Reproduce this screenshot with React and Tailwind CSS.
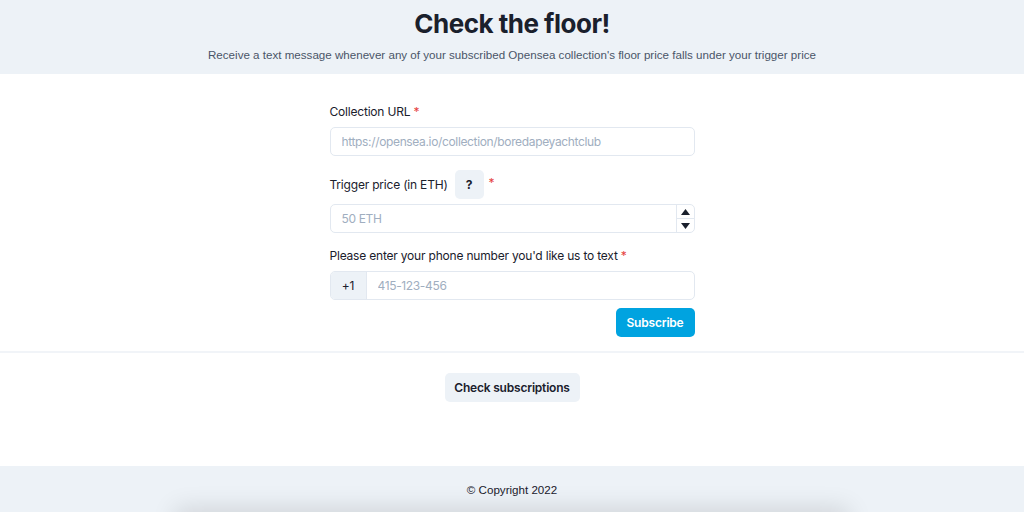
export default function App() {
  const sans = { fontFamily: "Inter, 'Noto Sans', sans-serif" };
  return (
    <div className="min-h-[512px] bg-white text-[#1a202c]" style={sans}>
      <header className="h-[74px] bg-[#edf2f7] flex flex-col items-center pt-[11px]">
        <h1 className="text-[26px] leading-[26px] font-bold tracking-[-0.5px] text-[#1a202c]">Check the floor!</h1>
        <p className="mt-[10px] text-[11.6px] leading-[16px] text-[#4a5568] font-['Liberation_Sans',Arial,sans-serif]">
          Receive a text message whenever any of your subscribed Opensea collection's floor price falls under your trigger price
        </p>
      </header>

      <main className="w-[365px] mx-auto pt-[30px] text-[12px] tracking-[-0.2px]">
        <label className="block leading-[16px]">
          Collection URL <span className="text-[#e53e3e]">*</span>
        </label>
        <input
          className="mt-[7px] w-full h-[29px] rounded-[5px] border border-[#e2e8f0] px-[11px] text-[12px] tracking-[-0.35px] placeholder:text-[#a0aec0] outline-none"
          placeholder="https://opensea.io/collection/boredapeyachtclub"
        />

        <div className="mt-[14px] flex items-center h-[29px]">
          <span className="leading-[16px]">Trigger price (in ETH)</span>
          <button className="ml-[7px] w-[29px] h-[29px] rounded-[5px] bg-[#edf2f7] font-bold text-[12px]">?</button>
          <span className="ml-[5px] -mt-[4px] text-[#e53e3e]">*</span>
        </div>
        <div className="mt-[5px] h-[29px] flex rounded-[5px] border border-[#e2e8f0]">
          <input
            className="flex-1 min-w-0 px-[11px] text-[12px] tracking-[-0.35px] placeholder:text-[#a0aec0] outline-none bg-transparent"
            placeholder="50 ETH"
          />
          <div className="w-[18px] border-l border-[#e2e8f0] flex flex-col">
            <div className="flex-1 flex items-center justify-center border-b border-[#e2e8f0]">
              <svg width="9" height="6" viewBox="0 0 9 6"><path d="M4.5 0L9 6H0z" fill="#1a202c" /></svg>
            </div>
            <div className="flex-1 flex items-center justify-center">
              <svg width="9" height="6" viewBox="0 0 9 6"><path d="M0 0h9L4.5 6z" fill="#1a202c" /></svg>
            </div>
          </div>
        </div>

        <label className="block mt-[15px] leading-[16px]">
          Please enter your phone number you'd like us to text <span className="text-[#e53e3e]">*</span>
        </label>
        <div className="mt-[7px] h-[29px] flex rounded-[5px] border border-[#e2e8f0] overflow-hidden">
          <div className="w-[36px] bg-[#edf2f7] flex items-center justify-center border-r border-[#e2e8f0]">+1</div>
          <input
            className="flex-1 min-w-0 px-[11px] text-[12px] tracking-[-0.35px] placeholder:text-[#a0aec0] outline-none"
            placeholder="415-123-456"
          />
        </div>

        <div className="mt-[8px] flex justify-end">
          <button className="h-[29px] w-[79px] rounded-[5px] bg-[#00a3e0] text-white font-semibold text-[12px]">Subscribe</button>
        </div>
      </main>

      <div className="mt-[14px] h-[2px] bg-[#f1f4f8]" />

      <div className="flex justify-center pt-[20px] pb-[64px]">
        <button className="h-[29px] w-[135px] rounded-[5px] bg-[#edf2f7] font-semibold text-[12px] tracking-[-0.2px]">Check subscriptions</button>
      </div>

      <footer className="h-[48px] bg-[#edf2f7] flex items-center justify-center text-[11.6px] text-[#1a202c] font-['Liberation_Sans',Arial,sans-serif]">
        © Copyright 2022
      </footer>
      <div className="mx-[175px] h-[40px] bg-[#e2e6ea] shadow-[0_-6px_24px_rgba(0,0,0,0.12)]" />
    </div>
  );
}
